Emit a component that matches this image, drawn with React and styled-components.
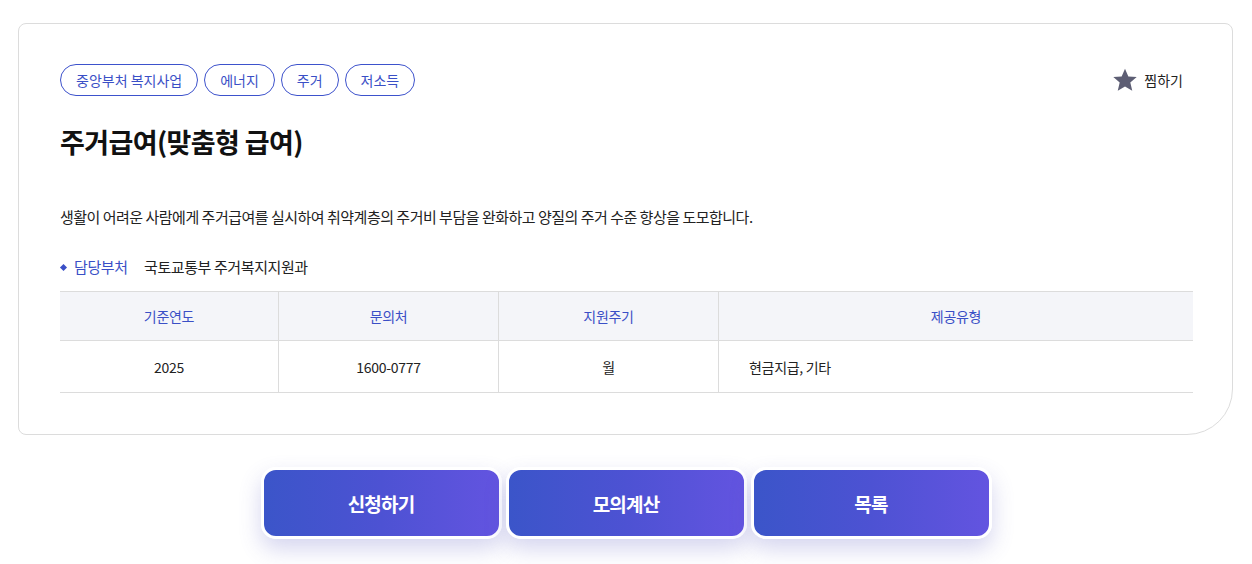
import React from 'react';
import styled, { createGlobalStyle } from 'styled-components';

const GlobalStyle = createGlobalStyle`
  * {
    box-sizing: border-box;
  }
  body {
    margin: 0;
    background: #fff;
    font-family: 'Noto Sans CJK KR', 'Noto Sans', sans-serif;
    color: #222;
  }
`;

const Page = styled.div`
  padding: 23px 19px 40px 18px;
`;

const Card = styled.section`
  border: 1px solid #dcdcdc;
  border-radius: 8px 8px 46px 8px;
  padding: 40px 39px 41px 41px;
`;

const TopRow = styled.div`
  display: flex;
  align-items: center;
  justify-content: space-between;
`;

const Tags = styled.div`
  display: flex;
  gap: 6px;
`;

const Tag = styled.span`
  display: inline-flex;
  align-items: center;
  height: 32px;
  padding: 0 15px;
  border: 1px solid #3d52cc;
  border-radius: 16px;
  color: #3a4fc6;
  font-size: 14px;
  letter-spacing: 0;
`;

const Bookmark = styled.button`
  display: flex;
  align-items: center;
  gap: 6px;
  margin-right: 10px;
  padding: 0;
  border: 0;
  background: none;
  font-family: inherit;
  font-size: 14px;
  letter-spacing: 0;
  color: #222;
  cursor: pointer;
`;

const Title = styled.h1`
  margin: 26px 0 0;
  font-size: 27px;
  line-height: 40px;
  font-weight: 700;
  letter-spacing: -0.6px;
  color: #111;
`;

const Desc = styled.p`
  margin: 44px 0 0;
  font-size: 15px;
  line-height: 22px;
  letter-spacing: -0.5px;
  color: #222;
`;

const InfoRow = styled.div`
  display: flex;
  align-items: center;
  margin-top: 28px;
  font-size: 15px;
  line-height: 22px;
  letter-spacing: -0.4px;
`;

const Diamond = styled.span`
  width: 5px;
  height: 5px;
  margin: 0 8px 0 1px;
  background: #3a4fc6;
  transform: rotate(45deg);
`;

const InfoLabel = styled.span`
  width: 70px;
  color: #3a4fc6;
`;

const Table = styled.div`
  margin-top: 13px;
  display: grid;
  grid-template-columns: 219px 220px 220px 1fr;
  border-top: 1px solid #dcdcdc;
  border-bottom: 1px solid #dcdcdc;
`;

const Cell = styled.div`
  display: flex;
  align-items: center;
  justify-content: ${p => (p.$left ? 'flex-start' : 'center')};
  padding-left: ${p => (p.$left ? '30px' : '0')};
  height: ${p => (p.$head ? '49px' : '51px')};
  font-size: 14px;
  letter-spacing: -0.3px;
  color: ${p => (p.$head ? '#3a4fc6' : '#222')};
  background: ${p => (p.$head ? '#f4f5f9' : '#fff')};
  border-bottom: ${p => (p.$head ? '1px solid #dcdcdc' : '0')};
  border-right: ${p => (p.$last ? '0' : '1px solid #dcdcdc')};
`;

const Actions = styled.div`
  display: flex;
  justify-content: center;
  gap: 4px;
  margin-top: 32px;
  padding-left: 1px;
`;

const ActionButton = styled.button`
  width: 241px;
  height: 72px;
  border: 3px solid #fff;
  border-radius: 15px;
  background: linear-gradient(90deg, #3b55c9 0%, #4d52d3 50%, #6354e0 100%);
  box-shadow: 0 10px 22px rgba(80, 80, 190, 0.24);
  color: #fff;
  font-family: inherit;
  font-size: 19px;
  font-weight: 700;
  letter-spacing: -0.8px;
  cursor: pointer;
`;

const StarIcon = () => (
  <svg width="26" height="26" viewBox="0 0 24 24" aria-hidden="true">
    <path
      fill="#5d5e74"
      d="M12 1.6l3.1 7.1 7.7.6-5.9 5.1 1.8 7.5L12 17.9l-6.7 4 1.8-7.5-5.9-5.1 7.7-.6z"
    />
  </svg>
);

const tags = ['중앙부처 복지사업', '에너지', '주거', '저소득'];
const heads = ['기준연도', '문의처', '지원주기', '제공유형'];
const values = ['2025', '1600-0777', '월', '현금지급, 기타'];

export default function App() {
  return (
    <Page>
      <GlobalStyle />
      <Card>
        <TopRow>
          <Tags>
            {tags.map(t => (
              <Tag key={t}>{t}</Tag>
            ))}
          </Tags>
          <Bookmark type="button">
            <StarIcon />
            찜하기
          </Bookmark>
        </TopRow>
        <Title>주거급여(맞춤형 급여)</Title>
        <Desc>
          생활이 어려운 사람에게 주거급여를 실시하여 취약계층의 주거비 부담을 완화하고 양질의 주거 수준 향상을 도모합니다.
        </Desc>
        <InfoRow>
          <Diamond />
          <InfoLabel>담당부처</InfoLabel>
          <span>국토교통부 주거복지지원과</span>
        </InfoRow>
        <Table>
          {heads.map((h, i) => (
            <Cell key={h} $head $last={i === 3}>
              {h}
            </Cell>
          ))}
          {values.map((v, i) => (
            <Cell key={v} $last={i === 3} $left={i === 3}>
              {v}
            </Cell>
          ))}
        </Table>
      </Card>
      <Actions>
        <ActionButton type="button">신청하기</ActionButton>
        <ActionButton type="button">모의계산</ActionButton>
        <ActionButton type="button">목록</ActionButton>
      </Actions>
    </Page>
  );
}
